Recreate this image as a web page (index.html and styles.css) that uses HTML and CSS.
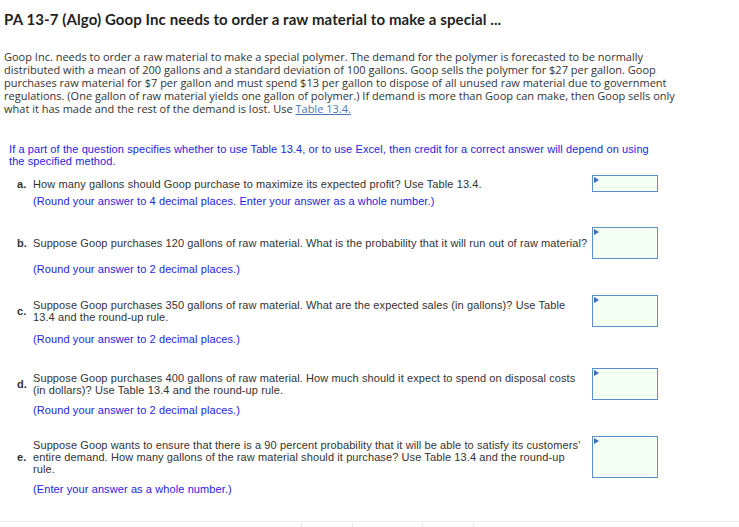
FILE: index.html
```html
<!DOCTYPE html>
<html>
<head>
<meta charset="utf-8">
<link rel="stylesheet" href="styles.css">
</head>
<body>
<div class="page">
  <h1 class="title">PA 13-7 (Algo) Goop Inc needs to order a raw material to make a special ...</h1>
  <p class="intro">Goop Inc. needs to order a raw material to make a special polymer. The demand for the polymer is forecasted to be normally distributed with a mean of 200 gallons and a standard deviation of 100 gallons. Goop sells the polymer for $27 per gallon. Goop purchases raw material for $7 per gallon and must spend $13 per gallon to dispose of all unused raw material due to government regulations. (One gallon of raw material yields one gallon of polymer.) If demand is more than Goop can make, then Goop sells only what it has made and the rest of the demand is lost. Use <a class="link" href="#">Table 13.4.</a></p>

  <p class="instruct">If a part of the question specifies whether to use Table 13.4, or to use Excel, then credit for a correct answer will depend on using the specified method.</p>

  <div class="questions">
    <div class="q q-a">
      <div class="q-row">
        <span class="q-letter">a.</span>
        <span class="q-text">How many gallons should Goop purchase to maximize its expected profit? Use Table 13.4.</span>
        <span class="answer answer-sm"><span class="flag"></span></span>
      </div>
      <div class="note note-a">(Round your answer to 4 decimal places. Enter your answer as a whole number.)</div>
    </div>

    <div class="q q-b">
      <div class="q-row">
        <span class="q-letter">b.</span>
        <span class="q-text q-text-wide">Suppose Goop purchases 120 gallons of raw material. What is the probability that it will run out of raw material?</span>
        <span class="answer answer-md"><span class="flag"></span></span>
      </div>
      <div class="note note-b">(Round your answer to 2 decimal places.)</div>
    </div>

    <div class="q q-c">
      <div class="q-row">
        <span class="q-letter">c.</span>
        <span class="q-text">Suppose Goop purchases 350 gallons of raw material. What are the expected sales (in gallons)? Use Table 13.4 and the round-up rule.</span>
        <span class="answer answer-md"><span class="flag"></span></span>
      </div>
      <div class="note note-c">(Round your answer to 2 decimal places.)</div>
    </div>

    <div class="q q-d">
      <div class="q-row">
        <span class="q-letter">d.</span>
        <span class="q-text">Suppose Goop purchases 400 gallons of raw material. How much should it expect to spend on disposal costs (in dollars)? Use Table 13.4 and the round-up rule.</span>
        <span class="answer answer-md"><span class="flag"></span></span>
      </div>
      <div class="note note-d">(Round your answer to 2 decimal places.)</div>
    </div>

    <div class="q q-e">
      <div class="q-row">
        <span class="q-letter">e.</span>
        <span class="q-text">Suppose Goop wants to ensure that there is a 90 percent probability that it will be able to satisfy its customers’ entire demand. How many gallons of the raw material should it purchase? Use Table 13.4 and the round-up rule.</span>
        <span class="answer answer-lg"><span class="flag"></span></span>
      </div>
      <div class="note note-e">(Enter your answer as a whole number.)</div>
    </div>
  </div>
</div>
<div class="footer">
  <span class="tick tick-1"></span>
  <span class="tick tick-2"></span>
  <span class="tick tick-3"></span>
  <span class="tick tick-4"></span>
</div>
</body>
</html>
```

FILE: styles.css
```css
html, body {
  margin: 0;
  padding: 0;
  background: #fff;
}

.page {
  height: 521px;
  padding: 0 4px;
  box-sizing: border-box;
  overflow: hidden;
}

.title {
  margin: 9px 0 0;
  font-family: Lato, "Liberation Sans", sans-serif;
  font-weight: 700;
  font-size: 15px;
  letter-spacing: 0.1px;
  line-height: 20px;
  color: #1f1f1f;
}

.intro {
  margin: 21px 0 0;
  font-family: "Open Sans", "Liberation Sans", sans-serif;
  font-size: 11px;
  line-height: 13px;
  color: #333;
  width: 690px;
}

.link {
  display: inline-block;
  line-height: 13px;
  color: #4a78b4;
  text-decoration: underline;
}

.instruct {
  margin: 28px 0 0 5px;
  font-family: "Liberation Sans", Arial, sans-serif;
  font-size: 11px;
  letter-spacing: 0.1px;
  line-height: 12px;
  color: #2424e6;
  width: 650px;
}

.questions {
  margin-top: 8px;
  font-family: "Liberation Sans", Arial, sans-serif;
  font-size: 11px;
  letter-spacing: 0.1px;
  line-height: 12px;
  color: #333;
}

.q-row {
  display: flex;
  align-items: center;
}

.q-letter {
  width: 16px;
  margin-left: 13px;
  flex: none;
  font-weight: 700;
}

.q-text {
  flex: none;
  width: 550px;
  margin-right: 9px;
}

.q-text-wide {
  width: 559px;
  margin-right: 0;
}

.answer {
  position: relative;
  flex: none;
  width: 64px;
  border: 1px solid #5b8fcb;
  background: #f2fff2;
}

.answer-sm { height: 15px; }
.answer-md { height: 30px; }
.answer-lg { height: 40px; }

.flag {
  position: absolute;
  left: 1px;
  top: 1px;
  width: 0;
  height: 0;
  border-top: 3px solid transparent;
  border-bottom: 3px solid transparent;
  border-left: 5px solid #3a6db5;
}

.note {
  margin-left: 29px;
  color: #2424e6;
}

.note-a { margin-top: 3px; }
.note-b { margin-top: 4px; }
.note-c { margin-top: 6px; }
.note-d { margin-top: 4px; }
.note-e { margin-top: 5px; }

.q-b { margin-top: 20px; }
.q-c { margin-top: 20px; }
.q-d { margin-top: 23px; }
.q-e { margin-top: 20px; }

.footer {
  position: relative;
  height: 6px;
  border-top: 1px solid #ececec;
}

.tick {
  position: absolute;
  top: 1px;
  width: 1px;
  height: 5px;
  background: #e6e6e6;
}

.tick-1 { left: 301px; }
.tick-2 { left: 352px; }
.tick-3 { left: 422px; }
.tick-4 { left: 473px; }
```
